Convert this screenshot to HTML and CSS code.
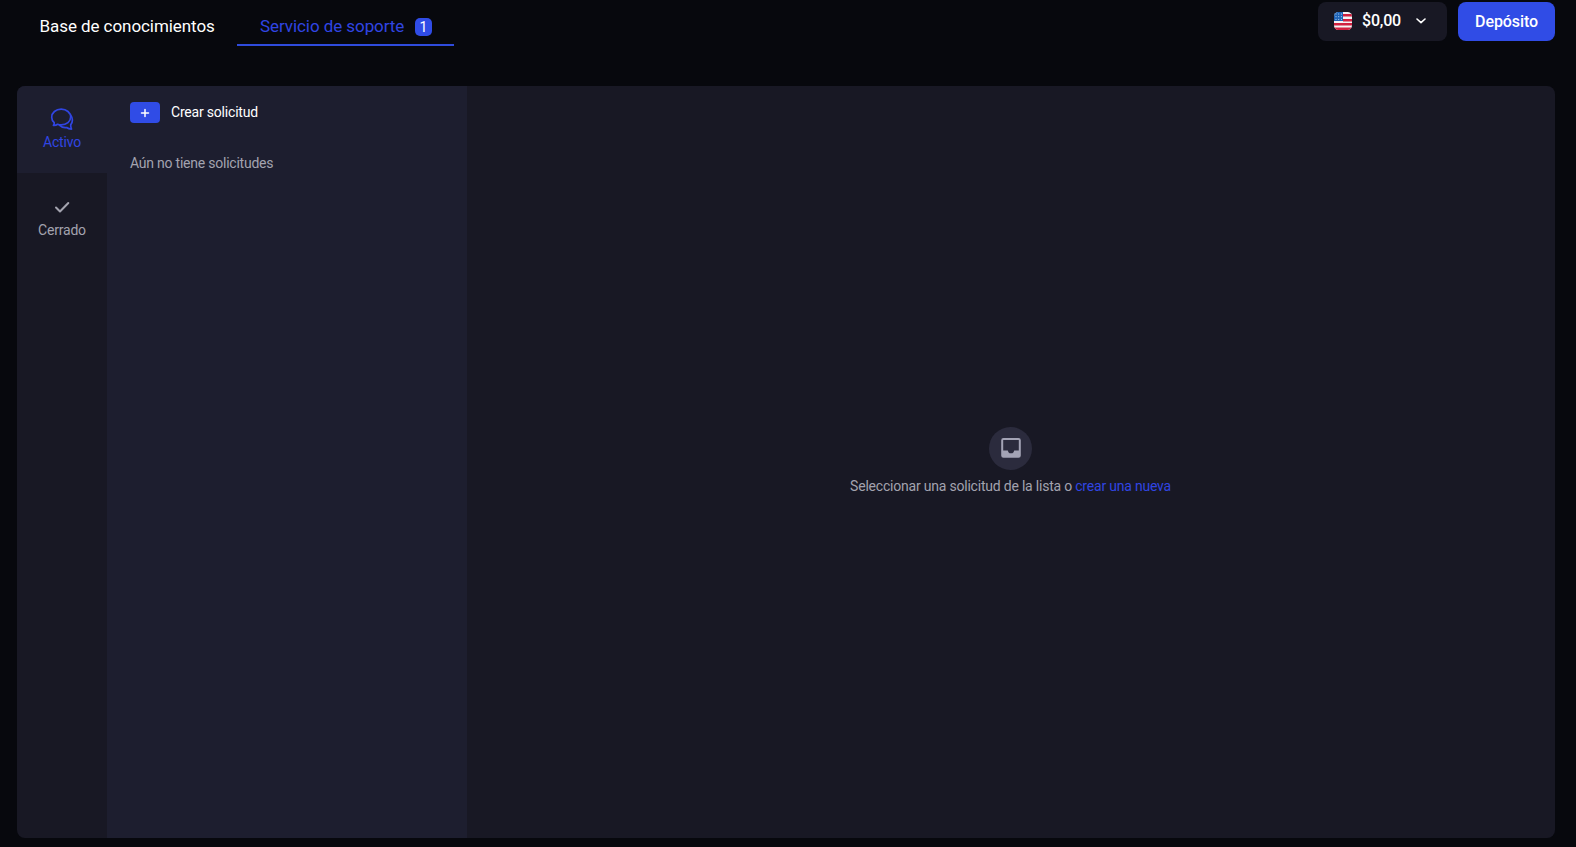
FILE: index.html
```html
<!DOCTYPE html>
<html lang="es">
<head>
<meta charset="utf-8">
<title>Servicio de soporte</title>
<link rel="stylesheet" href="styles.css">
</head>
<body>
<header class="header">
  <nav class="tabs">
    <a class="tab"><span class="tab-label">Base de conocimientos</span></a>
    <a class="tab tab-active"><span class="tab-label">Servicio de soporte</span><span class="badge">1</span></a>
  </nav>
  <div class="actions">
    <button class="balance">
      <svg class="flag" viewBox="0 0 18 18">
        <defs><clipPath id="flag-clip"><rect width="18" height="18" rx="4.5"/></clipPath></defs>
        <g clip-path="url(#flag-clip)">
          <rect width="18" height="18" fill="#f4f2f5"/>
          <path d="M9 3.2h9M9 8.2h9M0 12.2h18M0 16.7h18" stroke="#d01f3f" stroke-width="2.4" stroke-linecap="butt"/>
          <path d="M0 0h9v9H0z" fill="#1d62b5"/>
          <path d="M1.5 2h7M1.5 4.7h7M1.5 7.4h7" stroke="#b9d6f2" stroke-width="1" stroke-dasharray="1 1.7" stroke-linecap="butt"/>
        </g>
      </svg>
      <span class="amount">$0,00</span>
      <svg class="chevron" viewBox="0 0 10 6"><path d="M1 1l4 3.6L9 1"/></svg>
    </button>
    <button class="deposit">Depósito</button>
  </div>
</header>
<main class="panel">
  <aside class="sidebar">
    <a class="side-item side-active">
      <svg class="chat" viewBox="0 0 24 24"><path d="M4.200 15.600C2.600 14.200 1.700 12.300 1.700 10.200 1.700 5.700 5.800 2.200 11.200 2.200s9.500 3.500 9.500 7.900-4.200 7.800-9.500 7.800c-1.300 0-2.500-.2-3.600-.6-1.100.8-2.600 1.200-4.200 1.100 .7-.8 1-1.700.8-2.800z"/><path d="M20.700 8.200c1.200 1.500 1.700 3.100 1.700 4.900 0 1.900-.6 3.500-1.700 4.800 0 1.600.2 2.900.8 4.200-2-.1-3.600-.6-4.900-1.600-2.700.4-5.200-.4-7.200-2.400"/></svg>
      <span>Activo</span>
    </a>
    <a class="side-item side-closed">
      <svg class="check" viewBox="0 0 24 24"><path d="M6 12.500l4 4L18.300 8"/></svg>
      <span>Cerrado</span>
    </a>
  </aside>
  <section class="list">
    <a class="create"><span class="plus"><svg viewBox="0 0 10 10"><path d="M5 1.500v7M1.500 5h7"/></svg></span><span class="create-label">Crear solicitud</span></a>
    <p class="none">Aún no tiene solicitudes</p>
  </section>
  <section class="detail">
    <span class="circle"><svg viewBox="0 0 24 24"><path fill-rule="evenodd" d="M4.500 2h15a2.300 2.300 0 0 1 2.300 2.300v15.200a2.300 2.300 0 0 1-2.300 2.300h-15a2.300 2.300 0 0 1-2.300-2.300V4.300A2.300 2.300 0 0 1 4.500 2zM4.200 4v10.500h4.600q.4 2.300 1.800 2.700h2.800q1.400-.4 1.800-2.700h4.600V4z"/></svg></span>
    <p class="hint"><span class="hint-text">Seleccionar una solicitud de la lista o</span> <a>crear una nueva</a></p>
  </section>
</main>
</body>
</html>
```
FILE: styles.css
```css
* { box-sizing: border-box; }
body {
  margin: 0;
  height: 847px;
  overflow: hidden;
  background: #07080d;
  color: #fff;
  font: 14px/20px Roboto, sans-serif;
}
button { border: 0; font: inherit; color: inherit; }
p { margin: 0; }
svg { display: block; fill: none; stroke-linecap: round; stroke-linejoin: round; }
.header {
  display: flex;
  justify-content: space-between;
  align-items: flex-start;
  height: 86px;
  padding: 0 21px 0 17px;
}
.tabs { display: flex; padding-top: 6px; }
.tab {
  display: flex;
  align-items: center;
  height: 40px;
  padding: 2px 23px 0;
  border-bottom: 2px solid transparent;
  font-size: 17px;
  letter-spacing: -0.07px;
}
.tab:first-child { width: 220px; padding-left: 22.5px; }
.tab-label { white-space: nowrap; }
.tab-active { width: 217px; justify-content: space-between; padding-right: 22px; color: #3045e2; border-color: #2f4bdc; }
.badge {
  width: 17px;
  height: 18px;
  margin-top: 1px;
  border-radius: 5px;
  background: #304ce6;
  color: #fff;
  font-size: 14px;
  line-height: 18px;
  text-align: center;
}
.actions { display: flex; gap: 11px; padding-top: 2px; }
.balance {
  display: flex;
  align-items: center;
  width: 129px;
  height: 39px;
  padding: 0 0 2px 16px;
  border-radius: 8px;
  background: #181824;
}
.flag { width: 18px; height: 18px; }
.amount { margin-left: 10px; width: 39px; font-size: 16px; font-weight: 500; text-align: left; letter-spacing: -0.2px; }
.chevron { width: 10px; height: 6px; margin-left: 15px; stroke: #fff; stroke-width: 1.600; }
.deposit {
  width: 97px;
  height: 39px;
  padding: 0;
  border-radius: 8px;
  background: #304ce6;
  font-size: 16px;
  font-weight: 500;
  letter-spacing: -0.1px;
}
.panel {
  display: flex;
  width: 1538px;
  height: 752px;
  margin-left: 17px;
  border-radius: 8px;
  overflow: hidden;
  background: #181824;
  letter-spacing: -0.2px;
}
.sidebar { width: 90px; }
.side-item {
  display: flex;
  flex-direction: column;
  align-items: center;
  height: 87px;
  padding-top: 21px;
  color: #a3a3af;
}
.side-active { background: #1d1e2f; color: #3045e2; }
.side-closed { padding-top: 22px; }
.side-item span { line-height: 20px; margin-top: 1px; }
.chat, .check { width: 24px; height: 24px; stroke: currentColor; stroke-width: 1.700; }
.check { stroke-width: 2; }
.list { width: 360px; padding: 16px 23px; background: #1d1e2f; }
.create { display: flex; align-items: center; gap: 11px; height: 21px; }
.create-label { margin-top: -1px; }
.plus { display: grid; place-items: center; width: 30px; height: 21px; border-radius: 4px; background: #304ce6; }
.plus svg { width: 10px; height: 10px; stroke: #fff; stroke-width: 1.500; }
.none { margin-top: 30px; color: #a3a3af; letter-spacing: -0.23px; }
.detail {
  flex: 1;
  display: flex;
  flex-direction: column;
  align-items: center;
  justify-content: center;
  padding: 0 1px 2px 0;
  color: #a3a3af;
}
.circle { display: grid; place-items: center; width: 43px; height: 43px; border-radius: 50%; background: #2b2b3d; }
.circle svg { width: 24px; height: 24px; fill: #a3a3b5; }
.hint { margin-top: 6px; white-space: nowrap; letter-spacing: -0.21px; }
.hint a { color: #3045e2; }
```
